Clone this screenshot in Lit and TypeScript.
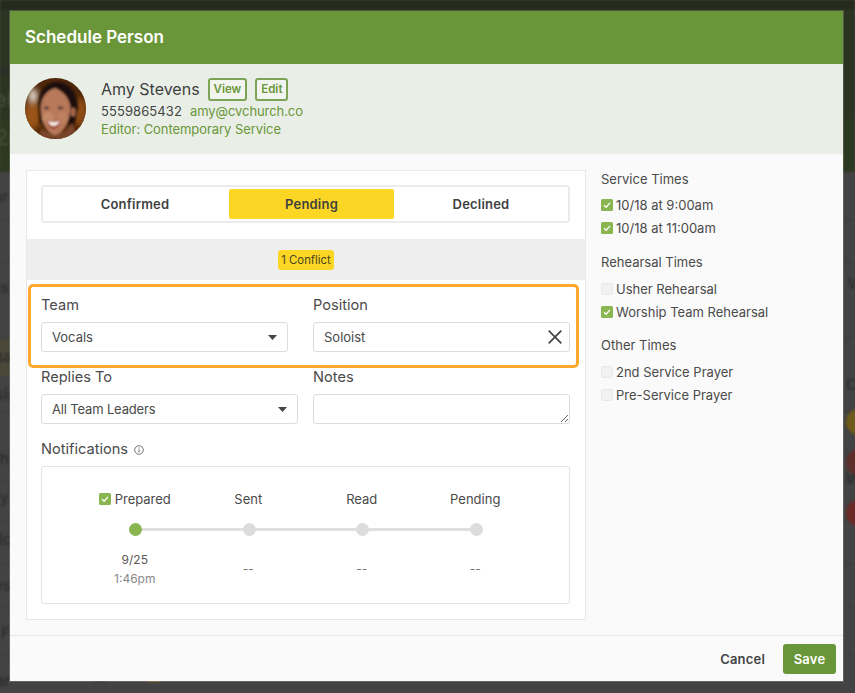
import { LitElement, html, css, svg } from "lit";
import { customElement } from "lit/decorators.js";

const check = html`<svg class="cb" viewBox="0 0 12 12"><rect width="12" height="12" rx="1.5" fill="#8ab651"/><path d="M3 6.3 5.1 8.3 9 3.9" fill="none" stroke="#fff" stroke-width="1.3"/></svg>`;
const uncheck = html`<svg class="cb" viewBox="0 0 12 12"><rect x=".5" y=".5" width="11" height="11" rx="1.5" fill="#f2f2f2" stroke="#e8e8e8"/></svg>`;
const caret = html`<svg class="caret" viewBox="0 0 9 5"><path d="M0 0H9L4.5 5Z" fill="#444"/></svg>`;

const photo = svg`<svg class="photo" viewBox="0 0 61 61">
  <defs>
    <clipPath id="c"><circle cx="30.5" cy="30.5" r="30.5"/></clipPath>
    <filter id="b" x="-30%" y="-30%" width="160%" height="160%"><feGaussianBlur stdDeviation="1.1"/></filter>
    <filter id="bb" x="-50%" y="-50%" width="200%" height="200%"><feGaussianBlur stdDeviation="3"/></filter>
  </defs>
  <g clip-path="url(#c)">
    <rect width="61" height="61" fill="#4e2609"/>
    <ellipse cx="7" cy="38" rx="9" ry="14" fill="#9a5417" filter="url(#bb)"/>
    <ellipse cx="55" cy="34" rx="8" ry="14" fill="#8f4c12" filter="url(#bb)"/>
    <ellipse cx="8" cy="18" rx="4.5" ry="8" fill="#efe4d8" filter="url(#bb)"/>
    <g filter="url(#b)">
      <path d="M14 30C13 12 22 4 32 4 43 4 52 13 53 30L49 47 15 45Z" fill="#1f100b"/>
      <path d="M17 50C27 60 36 60 47 45L54 61H12Z" fill="#7a452a"/>
      <path d="M16 27C17 17 24 12 30 10 37 13 43 18 45 27 46 42 39 56 30 57 22 57 15 42 16 27Z" fill="#b8785a"/>
      <ellipse cx="23" cy="40" rx="6" ry="6" fill="#c48a68"/>
      <ellipse cx="37" cy="40" rx="5" ry="6" fill="#bd8160"/>
      <ellipse cx="48" cy="34" rx="2.5" ry="4.5" fill="#a8684a"/>
      <ellipse cx="21.5" cy="30" rx="3" ry="1.4" fill="#5a4038"/>
      <ellipse cx="35.5" cy="30" rx="3" ry="1.4" fill="#5a4038"/>
      <path d="M21 42Q29 44 36 42 33 51 28.5 51 24 51 21 42Z" fill="#a04038"/>
      <path d="M22.5 43Q29 45 35 43 32.5 48 28.5 48 25 48 22.5 43Z" fill="#f7ece2"/>
    </g>
  </g>
</svg>`;

@customElement("app-root")
export class AppRoot extends LitElement {
  static styles = css`
    :host {
      display: block;
      position: relative;
      width: 855px;
      height: 693px;
      overflow: hidden;
      background: #434343;
      font-family: Inter, "Liberation Sans", sans-serif;
      font-size: 13px;
      color: #444;
      box-sizing: border-box;
      padding: 11px 12px 12px 10px;
    }
    * { box-sizing: border-box; }

    /* dimmed page behind the dialog */
    .bg { position: absolute; inset: 0; filter: blur(0.8px); }
    .bg-top { position: absolute; left: 0; right: 0; top: 0; height: 172px; background: #2b3421; }
    .bg-strip { position: absolute; left: 0; right: 0; top: 0; height: 10px; background: #262c1c; }
    .bg-sub { position: absolute; left: 0; right: 0; top: 120px; height: 52px; background: #2d3820; }
    .bg-tint { position: absolute; left: 0; width: 12px; top: 338px; height: 38px; background: #4b4838; }
    .bg-line { position: absolute; left: 0; right: 0; height: 1px; background: #3c3c3c; }
    .bg-t { position: absolute; color: #2c2c2c; font-size: 15px; line-height: 18px; font-weight: 500; }
    .bg-t.g { color: #434d38; font-size: 22px; }
    .bg-round { position: absolute; width: 26px; height: 26px; border-radius: 50%; }
    .bg-spot { position: absolute; top: 677px; width: 12px; height: 5px; }

    .modal {
      position: relative;
      display: flex;
      flex-direction: column;
      width: 833px;
      height: 670px;
      background: #fafafa;
      box-shadow: 0 0 0 1px rgba(255,255,255,.18);
    }
    .head {
      height: 53px;
      flex: none;
      background: #6a963a;
      color: #fff;
      font-size: 17px;
      font-weight: 600;
      display: flex;
      align-items: center;
      padding: 0 0 2px 15px;
    }
    .sub {
      height: 90px;
      flex: none;
      background: #e9efe6;
      display: flex;
      align-items: flex-start;
      padding: 14px 0 0 15px;
      gap: 15px;
    }
    .photo { width: 61px; height: 61px; flex: none; display: block; }
    .who { display: flex; flex-direction: column; margin-top: -1px; }
    .name-row { display: flex; align-items: center; gap: 8px; height: 24px; }
    .name { font-size: 16px; color: #3f3f3f; }
    .mini {
      height: 23px;
      padding: 0 4px;
      border: 2px solid #7da356;
      border-radius: 3px;
      color: #6a963a;
      font-size: 11.5px;
      font-weight: 600;
      display: flex;
      align-items: center;
      background: #f2f5ef;
    }
    .contact { display: flex; gap: 8px; line-height: 18px; margin-top: 1px; }
    .contact .phone { letter-spacing: .08px; }
    .contact .mail { letter-spacing: -.08px; }
    .contact .mail, .role { color: #6a963a; }
    .role { line-height: 18px; letter-spacing: -.06px; }

    .body {
      flex: 1;
      display: flex;
      align-items: flex-start;
      padding: 16px 0 0 16px;
      gap: 15px;
    }
    .card {
      width: 560px;
      height: 450px;
      flex: none;
      background: #fff;
      border: 1px solid #e8e8e8;
      padding-top: 14px;
    }
    .tabs {
      margin: 0 15px 0 14px;
      height: 38px;
      border: 2px solid #ebebeb;
      border-radius: 3px;
      display: grid;
      grid-template-columns: 186px 165px 1fr;
      padding: 2px 0;
      font-weight: 600;
      color: #3f3f3f;
      letter-spacing: .2px;
    }
    .tab { display: flex; align-items: center; justify-content: center; border-radius: 2px; }
    .tab:first-child { padding-right: 2px; }
    .tab.on { background: #fbd624; }
    .band {
      margin-top: 16px;
      height: 41px;
      background: #eee;
      display: flex;
      align-items: center;
      justify-content: center;
    }
    .badge {
      background: #fbd624;
      border-radius: 3px;
      height: 20px;
      padding: 0 3.5px;
      display: flex;
      align-items: center;
      font-size: 11.4px;
      color: #4a4520;
    }
    .hl {
      margin: 4px 6px 0 1px;
      height: 84px;
      border: 3px solid #ffa82e;
      border-radius: 5px;
      padding: 9px 6px 0 10px;
      display: grid;
      grid-template-columns: 247px 257px;
      column-gap: 25px;
    }
    .row2 {
      margin: 0 15px 0 14px;
      display: grid;
      grid-template-columns: 257px 257px;
      column-gap: 15px;
    }
    label, .lab { display: block; font-size: 14.6px; line-height: 19px; color: #4a4a4a; margin-bottom: 7px; }
    .ctl {
      height: 30px;
      border: 1px solid #dcdcdc;
      border-radius: 3px;
      background: #fff;
      display: flex;
      align-items: center;
      justify-content: space-between;
      padding: 0 10px;
      color: #4a4a4a;
    }
    .tight { letter-spacing: -.16px; }
    .caret { width: 9px; height: 5px; display: block; }
    .x { width: 14px; height: 14px; display: block; margin-right: -3px; }
    textarea {
      display: block;
      width: 100%;
      height: 30px;
      border: 1px solid #dcdcdc;
      border-radius: 3px;
      background: #fff;
      margin: 0;
      padding: 0;
      outline: none;
    }
    .notif { margin: 16px 15px 0 14px; }
    .lab { display: flex; align-items: center; }
    .lab svg { width: 10px; height: 10px; margin-left: 6px; }
    .box {
      height: 138px;
      border: 1px solid #e4e4e4;
      border-radius: 2px;
      padding: 23px 36px 0 37px;
      display: grid;
      grid-template-columns: repeat(4, 1fr);
    }
    .step { display: flex; flex-direction: column; align-items: center; }
    .st { display: flex; align-items: center; gap: 4px; line-height: 18px; color: #4a4a4a; white-space: nowrap; margin-right: 2px; }
    .rail { position: relative; width: 100%; height: 13px; margin-top: 15px; display: flex; justify-content: center; }
    .rail.line::after {
      content: "";
      position: absolute;
      left: 50%;
      width: 100%;
      top: 5px;
      height: 3px;
      background: #e0e0e0;
    }
    .dot { position: relative; z-index: 1; width: 13px; height: 13px; border-radius: 50%; background: #dcdcdc; }
    .dot.on { background: #8ab651; }
    .val { height: 37px; margin: 14px 2px 0 0; display: flex; flex-direction: column; align-items: center; justify-content: center; font-size: 12px; color: #777; }
    .val .d { line-height: 19px; color: #555; }
    .val .t { line-height: 19px; color: #888; }

    .side { width: 230px; }
    .sec + .sec { margin-top: 16px; }
    .sec + .sec + .sec { margin-top: 15px; }
    .h { line-height: 18px; margin-bottom: 8px; color: #4a4a4a; }
    .sec + .sec .h { margin-bottom: 9px; }
    .r { display: flex; align-items: center; gap: 3px; line-height: 18px; color: #4a4a4a; }
    .r + .r { margin-top: 5px; }
    .cb { width: 12px; height: 12px; flex: none; display: block; }

    .foot {
      height: 46px;
      flex: none;
      border-top: 1px solid #e6e6e6;
      display: flex;
      align-items: center;
      justify-content: flex-end;
      gap: 18px;
      padding: 1px 7px 0 0;
      font-weight: 600;
      font-size: 13px;
      letter-spacing: .2px;
    }
    .cancel { color: #444; }
    .save {
      width: 53px;
      height: 30px;
      background: #6a963a;
      color: #fff;
      border-radius: 3px;
      display: flex;
      align-items: center;
      justify-content: center;
    }
  `;

  private group(title: string, rows: [string, boolean][]) {
    return html`<div class="sec">
      <div class="h">${title}</div>
      ${rows.map(([t, on]) => html`<div class="r">${on ? check : uncheck}<span>${t}</span></div>`)}
    </div>`;
  }

  private step(title: string, value: unknown, on = false, line = true) {
    return html`<div class="step">
      <div class="st">${on ? check : ""}${title}</div>
      <div class="rail ${line ? "line" : ""}"><div class="dot ${on ? "on" : ""}"></div></div>
      <div class="val">${value}</div>
    </div>`;
  }

  render() {
    return html`
      <div class="bg">
        <div class="bg-top"></div>
        <div class="bg-strip"></div>
        <div class="bg-sub"></div>
        <div class="bg-tint"></div>
        ${[219, 261, 338, 411, 451, 482, 520, 563, 607, 655].map(
          (y) => html`<div class="bg-line" style="top:${y}px"></div>`
        )}
        ${[
          ["ser", -8, 62],
          ["ar", -6, 188],
          ["es", -8, 279],
          ["na", -6, 348],
          ["sig", -4, 386],
          ["h", 0, 450],
          ["y", 0, 489],
          ["tic", -6, 531],
          ["es", -6, 577],
          ["F", 1, 624],
          ["ar", -4, 672],
          ["W", 848, 275],
          ["C", 846, 376],
          ["W", 846, 470],
        ].map(([t, x, y]) => html`<div class="bg-t" style="left:${x}px;top:${y}px">${t}</div>`)}
        <div class="bg-t g" style="left:-6px;top:90px">el</div>
        <div class="bg-t g" style="left:-5px;top:128px">20</div>
        <div class="bg-round" style="left:846px;top:409px;background:#6e5a1c"></div>
        <div class="bg-round" style="left:846px;top:449px;background:#5e2f2a"></div>
        <div class="bg-round" style="left:846px;top:500px;background:#6b2a26"></div>
        <div class="bg-spot" style="left:94px;background:#333"></div>
        <div class="bg-spot" style="left:148px;background:#6e5a1c"></div>
      </div>

      <div class="modal">
        <div class="head">Schedule Person</div>
        <div class="sub">
          ${photo}
          <div class="who">
            <div class="name-row">
              <span class="name">Amy Stevens</span>
              <span class="mini">View</span>
              <span class="mini">Edit</span>
            </div>
            <div class="contact"><span class="phone">5559865432</span><span class="mail">amy@cvchurch.co</span></div>
            <div class="role">Editor: Contemporary Service</div>
          </div>
        </div>
        <div class="body">
          <div class="card">
            <div class="tabs">
              <div class="tab">Confirmed</div>
              <div class="tab on">Pending</div>
              <div class="tab">Declined</div>
            </div>
            <div class="band"><span class="badge">1 Conflict</span></div>
            <div class="hl">
              <div>
                <label>Team</label>
                <div class="ctl"><span>Vocals</span>${caret}</div>
              </div>
              <div>
                <label>Position</label>
                <div class="ctl">
                  <span>Soloist</span>
                  <svg class="x" viewBox="0 0 14 14"><path d="M.7.7 13.3 13.3M13.3.7.7 13.3" stroke="#444" stroke-width="1.7" fill="none"/></svg>
                </div>
              </div>
            </div>
            <div class="row2">
              <div>
                <label>Replies To</label>
                <div class="ctl"><span class="tight">All Team Leaders</span>${caret}</div>
              </div>
              <div>
                <label>Notes</label>
                <textarea></textarea>
              </div>
            </div>
            <div class="notif">
              <div class="lab">Notifications
                <svg viewBox="0 0 10 10"><circle cx="5" cy="5" r="4.3" fill="none" stroke="#666" stroke-width=".9"/><path d="M5 4.4V7.4M5 2.5V3.5" stroke="#666" stroke-width="1"/></svg>
              </div>
              <div class="box">
                ${this.step("Prepared", html`<span class="d">9/25</span><span class="t">1:46pm</span>`, true)}
                ${this.step("Sent", "--")}
                ${this.step("Read", "--")}
                ${this.step("Pending", "--", false, false)}
              </div>
            </div>
          </div>
          <div class="side">
            ${this.group("Service Times", [["10/18 at 9:00am", true], ["10/18 at 11:00am", true]])}
            ${this.group("Rehearsal Times", [["Usher Rehearsal", false], ["Worship Team Rehearsal", true]])}
            ${this.group("Other Times", [["2nd Service Prayer", false], ["Pre-Service Prayer", false]])}
          </div>
        </div>
        <div class="foot">
          <span class="cancel">Cancel</span>
          <span class="save">Save</span>
        </div>
      </div>
    `;
  }
}
